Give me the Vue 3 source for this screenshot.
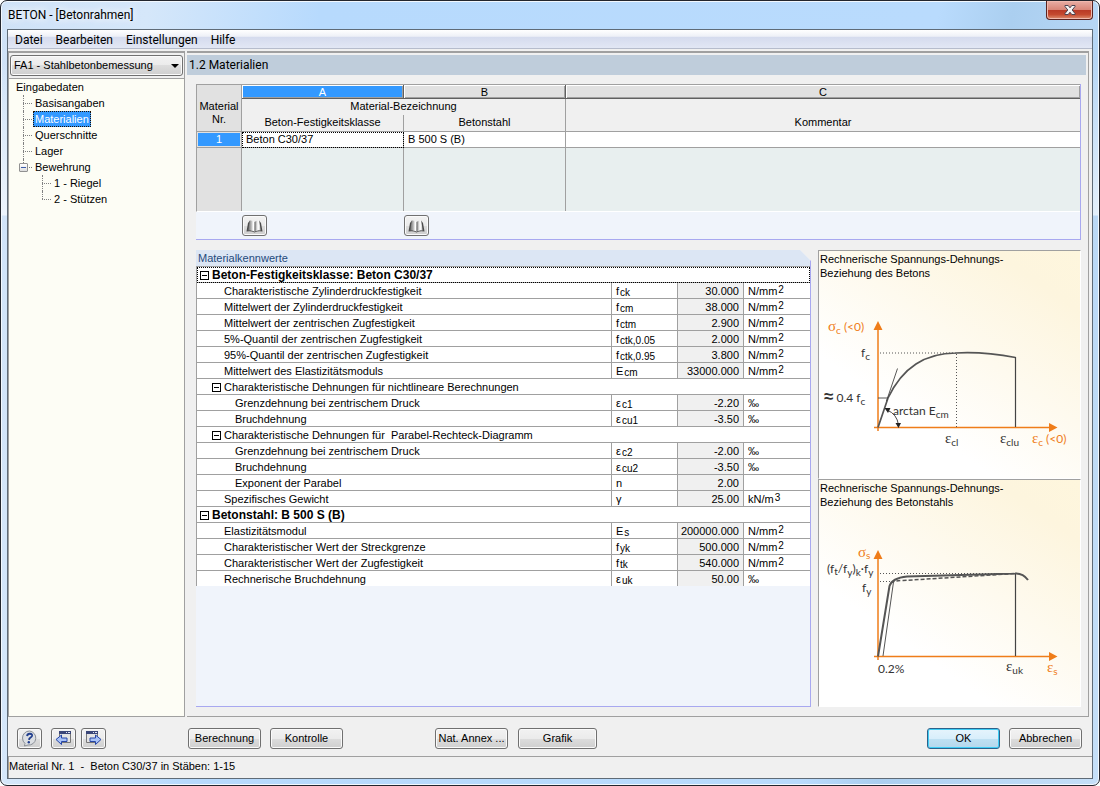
<script setup>
const menu = ['Datei', 'Bearbeiten', 'Einstellungen', 'Hilfe']

const rows = [
  { kind: 'section', name: 'Beton-Festigkeitsklasse: Beton C30/37', focus: true },
  { name: 'Charakteristische Zylinderdruckfestigkeit', sym: 'f', sub: 'ck', value: '30.000', unit: 'N/mm', sup: '2' },
  { name: 'Mittelwert der Zylinderdruckfestigkeit', sym: 'f', sub: 'cm', value: '38.000', unit: 'N/mm', sup: '2' },
  { name: 'Mittelwert der zentrischen Zugfestigkeit', sym: 'f', sub: 'ctm', value: '2.900', unit: 'N/mm', sup: '2' },
  { name: '5%-Quantil der zentrischen Zugfestigkeit', sym: 'f', sub: 'ctk,0.05', value: '2.000', unit: 'N/mm', sup: '2' },
  { name: '95%-Quantil der zentrischen Zugfestigkeit', sym: 'f', sub: 'ctk,0.95', value: '3.800', unit: 'N/mm', sup: '2' },
  { name: 'Mittelwert des Elastizitätsmoduls', sym: 'E', sub: 'cm', value: '33000.000', unit: 'N/mm', sup: '2' },
  { kind: 'subsection', name: 'Charakteristische Dehnungen für nichtlineare Berechnungen' },
  { deep: true, name: 'Grenzdehnung bei zentrischem Druck', sym: 'ε', sub: 'c1', value: '-2.20', unit: '‰' },
  { deep: true, name: 'Bruchdehnung', sym: 'ε', sub: 'cu1', value: '-3.50', unit: '‰' },
  { kind: 'subsection', name: 'Charakteristische Dehnungen für\u00a0 Parabel-Rechteck-Diagramm' },
  { deep: true, name: 'Grenzdehnung bei zentrischem Druck', sym: 'ε', sub: 'c2', value: '-2.00', unit: '‰' },
  { deep: true, name: 'Bruchdehnung', sym: 'ε', sub: 'cu2', value: '-3.50', unit: '‰' },
  { deep: true, name: 'Exponent der Parabel', sym: 'n', value: '2.00' },
  { name: 'Spezifisches Gewicht', sym: 'γ', value: '25.00', unit: 'kN/m', sup: '3' },
  { kind: 'section', name: 'Betonstahl: B 500 S (B)' },
  { name: 'Elastizitätsmodul', sym: 'E', sub: 's', value: '200000.000', unit: 'N/mm', sup: '2' },
  { name: 'Charakteristischer Wert der Streckgrenze', sym: 'f', sub: 'yk', value: '500.000', unit: 'N/mm', sup: '2' },
  { name: 'Charakteristischer Wert der Zugfestigkeit', sym: 'f', sub: 'tk', value: '540.000', unit: 'N/mm', sup: '2' },
  { name: 'Rechnerische Bruchdehnung', sym: 'ε', sub: 'uk', value: '50.00', unit: '‰' },
]
</script>

<template>
  <div class="window">
    <header class="titlebar">
      <h1>BETON - [Betonrahmen]</h1>
      <button class="close" type="button" aria-label="Schließen">
        <svg width="12" height="10" viewBox="0 0 12 10">
          <path d="M1 .5H4.2L6 2.8 7.8.5H11V1.5L8.2 5 11 8.5V9.5H7.8L6 7.2 4.2 9.5H1V8.5L3.8 5 1 1.5Z" fill="#f4f4f4" stroke="#4a4350" stroke-width="1" />
        </svg>
      </button>
    </header>

    <div class="client">
      <nav class="menubar">
        <a v-for="item in menu" :key="item" href="#">{{ item }}</a>
      </nav>

      <div class="workspace">
        <aside class="navigator">
          <div class="picker">
            <select aria-label="Bemessungsfall">
              <option>FA1 - Stahlbetonbemessung</option>
            </select>
            <svg class="arrow" width="8" height="4" viewBox="0 0 8 4"><path d="M0 0H8L4 4Z" fill="#000" /></svg>
          </div>
          <div class="tree">
            <a href="#">Eingabedaten</a>
            <ul>
              <li><a href="#">Basisangaben</a></li>
              <li><a href="#" class="selected">Materialien</a></li>
              <li><a href="#">Querschnitte</a></li>
              <li><a href="#">Lager</a></li>
              <li class="open">
                <button class="toggle" type="button" aria-label="Bewehrung zuklappen"></button>
                <a href="#">Bewehrung</a>
                <ul>
                  <li><a href="#">1 - Riegel</a></li>
                  <li><a href="#">2 - Stützen</a></li>
                </ul>
              </li>
            </ul>
          </div>
        </aside>

        <main class="page">
          <h2>1.2 Materialien</h2>

          <section class="materials">
            <table>
              <colgroup>
                <col class="c-nr" /><col class="c-a" /><col class="c-a" /><col />
              </colgroup>
              <thead>
                <tr class="letters">
                  <th rowspan="3" class="corner">Material<br />Nr.</th>
                  <th class="letter active"><span>A</span></th>
                  <th class="letter"><span>B</span></th>
                  <th class="letter last"><span>C</span></th>
                </tr>
                <tr class="captions">
                  <th colspan="2" class="edge">Material-Bezeichnung</th>
                  <th></th>
                </tr>
                <tr class="captions bottom">
                  <th class="edge">Beton-Festigkeitsklasse</th>
                  <th class="edge">Betonstahl</th>
                  <th>Kommentar</th>
                </tr>
              </thead>
              <tbody>
                <tr class="data">
                  <th class="rowno">1</th>
                  <td class="focus">Beton C30/37</td>
                  <td>B 500 S (B)</td>
                  <td></td>
                </tr>
                <tr class="filler"><th></th><td></td><td></td><td></td></tr>
              </tbody>
            </table>
            <div class="library">
              <button v-for="n in 2" :key="n" class="btn icon" type="button" aria-label="Bibliothek">
                <svg width="17" height="14" viewBox="0 0 17 14">
                  <defs>
                    <linearGradient id="leaf-left" x1="0" x2="1"><stop offset="0" stop-color="#6d6d6d" /><stop offset=".5" stop-color="#b9b9b9" /><stop offset=".8" stop-color="#fff" /></linearGradient>
                    <linearGradient id="leaf-right" x1="0" x2="1"><stop offset="0" stop-color="#555" /><stop offset=".4" stop-color="#e8e8e8" /><stop offset=".7" stop-color="#fff" /><stop offset="1" stop-color="#999" /></linearGradient>
                  </defs>
                  <path d="M.5 12.500 2 4 4 1.500V11L8.500 12.500 13 11V1.500L15 4 16.500 12.500Q12 11.500 8.500 13.500 5 11.500.5 12.500Z" fill="#4c4c4c" />
                  <path d="M3.800 1.500Q6.500 1 8.500 3V12.500Q6 10.500 2.200 11.500Z" fill="url(#leaf-left)" />
                  <path d="M8.500 3Q10.500 1 13.200 1.500L14.800 11.500Q11 10.500 8.500 12.500Z" fill="url(#leaf-right)" />
                </svg>
              </button>
            </div>
          </section>

          <div class="details">
            <section class="properties">
              <h3>Materialkennwerte</h3>
              <table>
                <colgroup>
                  <col /><col class="c-v" /><col class="c-v" /><col class="c-v" />
                </colgroup>
                <tbody>
                  <tr v-for="(row, i) in rows" :key="i">
                    <td v-if="row.kind" colspan="4" :class="[row.kind, { focus: row.focus }]">
                      <button class="fold" type="button" aria-label="Zuklappen"></button>{{ row.name }}
                    </td>
                    <template v-else>
                      <td :class="row.deep ? 'deep' : 'name'">{{ row.name }}</td>
                      <td class="symbol">{{ row.sym }}<sub v-if="row.sub">{{ row.sub }}</sub></td>
                      <td class="value">{{ row.value }}</td>
                      <td class="unit">{{ row.unit }}<sup v-if="row.sup">{{ row.sup }}</sup></td>
                    </template>
                  </tr>
                </tbody>
              </table>
            </section>

            <div class="diagrams">
              <figure>
                <figcaption>Rechnerische Spannungs-Dehnungs-<br />Beziehung des Betons</figcaption>
                <svg width="261" height="190" viewBox="0 0 261 190">
                  <path d="M59 151V50M55 147.500H230" fill="none" stroke="#ef7d1a" stroke-width="1.500" />
                  <path d="M59 41 63.500 50H54.500ZM238.500 147.500 230 143V152Z" fill="#ef7d1a" />
                  <path d="M61 73H138M137.500 74V147" fill="none" stroke="#555" stroke-width="1" stroke-dasharray="1 2" />
                  <path d="M59 147.500 69 118Q80 95 97 84T137 73Q165 71.500 196.500 77.500" fill="none" stroke="#555" stroke-width="1.700" />
                  <path d="M196.500 77V147" stroke="#444" stroke-width="1.200" />
                  <path d="M59 118H69M67.500 121 78.500 88.500" fill="none" stroke="#444" stroke-width=".9" />
                  <path d="M68 130Q78 134 79.500 145" fill="none" stroke="#333" stroke-width=".9" />
                  <path d="M65.500 128 71.500 128 69 133ZM79.500 148 76.500 143H82Z" fill="#222" />
                  <g class="orange">
                    <text x="9" y="51"><tspan class="greek">σ</tspan><tspan class="small" dy="3">c</tspan><tspan dy="-3" dx="3">(&lt;0)</tspan></text>
                    <text x="213" y="163"><tspan class="greek">ε</tspan><tspan class="small" dy="3">c</tspan><tspan dy="-3" dx="3">(&lt;0)</tspan></text>
                  </g>
                  <text x="42" y="77">f<tspan class="small" dy="3">c</tspan></text>
                  <text x="5" y="122"><tspan class="approx">≈</tspan> 0.4 f<tspan class="small" dy="3">c</tspan></text>
                  <text x="74" y="135">arctan E<tspan class="small" dy="3">cm</tspan></text>
                  <text x="126" y="163"><tspan class="greek">ε</tspan><tspan class="small" dy="3">cl</tspan></text>
                  <text x="181" y="163"><tspan class="greek">ε</tspan><tspan class="small" dy="3">clu</tspan></text>
                </svg>
              </figure>
              <figure>
                <figcaption>Rechnerische Spannungs-Dehnungs-<br />Beziehung des Betonstahls</figcaption>
                <svg width="261" height="190" viewBox="0 0 261 190">
                  <path d="M59 151V50M55 147.500H230" fill="none" stroke="#ef7d1a" stroke-width="1.500" />
                  <path d="M59 41 63.500 50H54.500ZM238.500 147.500 230 143V152Z" fill="#ef7d1a" />
                  <path d="M61 64.500H196M61 72.500H75" fill="none" stroke="#555" stroke-dasharray="1 2" />
                  <path d="M59 147.500 70.500 77Q73 69 88 67.500L196 64.500Q204 64 209 71" fill="none" stroke="#555" stroke-width="2" />
                  <path d="M72 74Q75 71.500 84 71.500L196 64.500" fill="none" stroke="#555" stroke-width="1.500" stroke-dasharray="4 2" />
                  <path d="M64 147 74.500 73" stroke="#555" stroke-width="1" />
                  <path d="M196.500 65V147" stroke="#444" stroke-width="1.200" />
                  <g class="orange">
                    <text x="39" y="48"><tspan class="greek">σ</tspan><tspan class="small" dy="2">s</tspan></text>
                    <text x="228" y="163"><tspan class="greek">ε</tspan><tspan class="small" dy="3">s</tspan></text>
                  </g>
                  <text x="8" y="64">(f<tspan class="small" dy="2">t</tspan><tspan dy="-2">/f</tspan><tspan class="small" dy="3">y</tspan><tspan dy="-3">)</tspan><tspan class="small" dy="3">k</tspan><tspan dy="-3">·f</tspan><tspan class="small" dy="3">y</tspan></text>
                  <text x="43" y="83">f<tspan class="small" dy="3">y</tspan></text>
                  <text x="59" y="164">0.2%</text>
                  <text x="187" y="162"><tspan class="greek">ε</tspan><tspan class="small" dy="3">uk</tspan></text>
                </svg>
              </figure>
            </div>
          </div>
        </main>
      </div>

      <footer class="actions">
        <div class="tools">
          <button class="btn icon help" type="button" aria-label="Hilfe">
            <svg width="19" height="17" viewBox="0 0 19 17">
              <path d="M9.500 1A7 7 0 1 1 8 15Q6 15.500 4.500 16 4.500 14.500 5 13.500 2.500 11.500 2.500 8A7 7 0 0 1 9.500 1Z" fill="#dcdfe3" stroke="#8a8f96" />
              <path d="M7 6Q7.500 3.500 10 3.700 12.500 4 12 6 11.500 7.200 10 8 9.200 8.600 9 9.800" fill="none" stroke="#223f8e" stroke-width="1.900" />
              <circle cx="8.800" cy="12.200" r="1.200" fill="#223f8e" />
            </svg>
          </button>
          <button class="btn icon" type="button" aria-label="Zurück">
            <svg width="17" height="17" viewBox="0 0 17 17">
              <path d="M4.500 1.500H15.500V12.500H4.500Z" fill="#e4e4e4" stroke="#777" />
              <path d="M4 1H16V4H4Z" fill="#3a4678" /><path d="M11 2H12V3H11ZM13 2H15V3H13Z" fill="#dfe4f5" />
              <path d="M1 9.500 6.500 5V8H12V11.500H6.500V14.500Z" fill="#a9c2f7" stroke="#2646a8" />
            </svg>
          </button>
          <button class="btn icon" type="button" aria-label="Weiter">
            <svg width="17" height="17" viewBox="0 0 17 17">
              <path d="M1.500 1.500H12.500V12.500H1.500Z" fill="#e4e4e4" stroke="#777" />
              <path d="M1 1H13V4H1Z" fill="#3a4678" /><path d="M8 2H9V3H8ZM10 2H12V3H10Z" fill="#dfe4f5" />
              <path d="M16 9.500 10.500 5V8H5V11.500H10.500V14.500Z" fill="#a9c2f7" stroke="#2646a8" />
            </svg>
          </button>
        </div>
        <div class="buttons">
          <button class="btn" type="button">Berechnung</button>
          <button class="btn" type="button">Kontrolle</button>
        </div>
        <div class="buttons second">
          <button class="btn" type="button">Nat. Annex ...</button>
          <button class="btn wide" type="button">Grafik</button>
        </div>
        <div class="buttons confirm">
          <button class="btn ok" type="button">OK</button>
          <button class="btn" type="button">Abbrechen</button>
        </div>
      </footer>

      <div class="status">Material Nr. 1&nbsp; -&nbsp; Beton C30/37 in Stäben: 1-15</div>
    </div>
  </div>
</template>

<style>
body { background: #fff; }
</style>

<style scoped>
* { box-sizing: border-box; }
a { color: inherit; text-decoration: none; }
h1, h2, h3, ul, figure { margin: 0; padding: 0; font-weight: normal; }
ul { list-style: none; }
button, select { font: inherit; color: inherit; padding: 0; margin: 0; }
table { width: 100%; table-layout: fixed; border-collapse: separate; border-spacing: 0; }
th, td { padding: 0; font-weight: normal; white-space: nowrap; }
svg { display: block; }

.window {
  display: flex;
  flex-direction: column;
  min-height: 100vh;
  padding: 0 6px 6px;
  border: 1px solid #23262e;
  border-radius: 7px;
  box-shadow: inset 0 0 0 1px #f2f8fe;
  background:
    linear-gradient(transparent 60px, rgba(255, 255, 255, 0.6) 214px, transparent 215px),
    linear-gradient(100deg, #cfe2f7 0, #d5e7fa 12%, #b7dafd 26%, #b9dbfd 76%, #abcff0 82%, #b8d7f5 90%, #c5dff8 100%);
  font: 11px/13px "Liberation Sans", Arial, sans-serif;
  color: #000;
}
.titlebar {
  display: flex;
  justify-content: space-between;
  align-items: flex-start;
  height: 28px;
  padding-left: 1px;
}
.titlebar h1 {
  font: 12px/16px Roboto, "Segoe UI", sans-serif;
  margin-top: 6px;
  text-shadow: 0 0 8px #fff, 0 0 8px #fff;
}
.close {
  display: flex;
  align-items: center;
  justify-content: center;
  width: 47px;
  height: 19px;
  border: 1px solid #5b2320;
  border-top: 0;
  border-radius: 0 0 4px 4px;
  background: linear-gradient(#e8aea5 0, #d98678 48%, #b93a26 52%, #c4492f 75%, #dd8f70 100%);
  box-shadow: inset 0 0 0 1px #f0b9ae;
}
.client {
  flex: 1;
  display: flex;
  flex-direction: column;
  border: 1px solid #5f6b77;
  background: #f0f0f0;
}
.menubar {
  display: flex;
  gap: 13px;
  height: 19px;
  padding-left: 7px;
  border-bottom: 1px solid #b6bccc;
  background: linear-gradient(#fff 0, #eef0f7 35%, #d5dbee 40%, #e2e7f4 100%);
  font: 12px/20px Roboto, "Segoe UI", sans-serif;
}
.workspace {
  flex: 1;
  display: flex;
  gap: 2px;
  margin-top: 2px;
  padding-right: 3px;
}
.navigator {
  display: flex;
  flex-direction: column;
  width: 177px;
  border: 1px solid #a0a0a0;
  border-top-width: 2px;
  background: #f0f0f0;
}
.picker { position: relative; padding: 2px 1px; border-bottom: 1px solid #a0a0a0; }
.picker select {
  display: block;
  appearance: none;
  width: 100%;
  height: 21px;
  padding-left: 3px;
  border: 1px solid #707070;
  border-radius: 3px;
  background: linear-gradient(#f2f2f2 0, #ebebeb 50%, #dddddd 50%, #cfcfcf 100%);
  box-shadow: inset 0 0 0 1px #fafafa;
}
.picker .arrow { position: absolute; right: 5px; top: 11px; }
.tree { flex: 1; padding: 0 7px; background: #fdfdf5; line-height: 16px; }
.tree a { display: inline-block; height: 16px; vertical-align: top; }
.tree ul { padding-left: 7px; }
.tree li { position: relative; padding-left: 10px; }
.tree li::before {
  content: "";
  position: absolute;
  left: 0;
  top: 8px;
  width: 9px;
  border-top: 1px dotted #808080;
}
.tree li::after {
  content: "";
  position: absolute;
  left: 0;
  top: 0;
  height: 16px;
  border-left: 1px dotted #808080;
}
.tree li:last-child::after { height: 8px; }
.tree li a { padding: 0 2px; }
.tree li ul { padding-left: 9px; }
.tree .selected {
  background: #3399ff;
  color: #fff;
  outline: 1px dotted #201000;
  outline-offset: -1px;
}
.toggle {
  position: absolute;
  z-index: 1;
  left: -4px;
  top: 4px;
  width: 9px;
  height: 9px;
  border: 1px solid #919191;
  border-radius: 1px;
  background: linear-gradient(#3b5ba8, #3b5ba8) center / 5px 1px no-repeat, linear-gradient(#fff, #ddd);
}

.page {
  flex: 1;
  min-width: 0;
  display: flex;
  flex-direction: column;
  padding: 2px 2px 9px 0;
  border: solid #a0a0a0;
  border-width: 2px 1px 1px 0;
}
.page h2 {
  height: 20px;
  padding-left: 2px;
  background: #bfcddb;
  font: 12px/20px Roboto, "Segoe UI", sans-serif;
}
.materials {
  margin: 9px 5px 0 9px;
  border: solid #a8a8f0;
  border-width: 0 1px 1px 0;
  background: #f0f4fb;
}
.materials table { border-top: 1px solid #a0a0a0; border-left: 1px solid #a0a0a0; border-bottom: 1px solid #fff; }
.c-nr { width: 45px; }
.c-a { width: 162px; }
.materials th, .materials td { border: solid #a0a0a0; border-width: 0 1px 1px 0; }
.materials tr > :last-child { border-right: 0; }
.materials .corner { padding-top: 9px; background: #e1e1e1; vertical-align: middle; }
.materials .letter {
  height: 14px;
  padding: 1px 0 0 1px;
  border-color: #606060;
  border-right-width: 1px;
  background: #fff;
  line-height: 12px;
}
.letter span { display: block; height: 12px; background: #e1e1e1; border: solid #a0a0a0; border-width: 0 1px 1px 0; }
.materials .active span { background: #3399ff; color: #fff; }
.materials .captions th { height: 16px; background: #f0f0f0; border-width: 0; line-height: 14px; vertical-align: top; }
.materials .captions .edge { border-right-width: 1px; }
.materials .bottom th { height: 17px; border-bottom-width: 1px; }
.materials .data th, .materials .data td { height: 16px; line-height: 15px; }
.materials .data td { background: #fff; padding-left: 4px; }
.materials .data th { background: #3399ff; color: #fff; box-shadow: inset 0 0 0 1px #e1e1e1; }
.data .focus { outline: 1px dotted #000; outline-offset: -1px; }
.materials .filler th { height: 63px; background: #e1e1e1; border-bottom: 0; }
.materials .filler td { background: #e8efef; border-bottom: 0; }
.library { display: flex; gap: 137px; padding: 3px 0 3px 46px; }

.details { flex: 1; display: flex; gap: 7px; margin: 10px 5px 0 9px; }
.properties {
  flex: 1;
  min-width: 0;
  border: solid #a8a8f0;
  border-width: 0 1px 1px 0;
  background: #f0f4fb;
  clip-path: polygon(0 0, calc(100% - 11px) 0, 100% 11px, 100% 100%, 0 100%);
}
.properties h3 {
  height: 16px;
  padding-left: 2px;
  background: #dce6f4;
  color: #1f4a7c;
  font-size: 11px;
  line-height: 17px;
}
.properties table { border: solid #a0a0a0; border-width: 1px 0 0 1px; background: #fff; }
.c-v { width: 66px; }
.properties td { height: 16px; padding-top: 1px; line-height: 14px; border-bottom: 1px solid #a0a0a0; }
.properties tr:last-child td { height: 15px; border-bottom: 0; }
.properties .name { padding-left: 27px; border-right: 1px solid #a0a0a0; }
.properties .deep { padding-left: 38px; border-right: 1px solid #a0a0a0; }
.properties .symbol { padding-left: 4px; border-right: 1px solid #a0a0a0; }
.properties .value { padding-right: 4px; text-align: right; background: #f0f0f0; border-right: 1px solid #a0a0a0; }
.properties .unit { padding-left: 4px; }
.properties sub, .properties sup { font-size: 10px; line-height: 0; }
.properties sub { vertical-align: -1px; margin-left: 1px; }
.properties sup { vertical-align: 2px; margin-left: 1px; }
.properties .section { padding-left: 3px; font-weight: bold; font-size: 12px; }
.properties .subsection { padding-left: 15px; }
.properties .focus { outline: 1px dotted #000; outline-offset: -1px; }
.fold {
  display: inline-block;
  width: 9px;
  height: 9px;
  margin-right: 3px;
  border: 1px solid #000;
  background: linear-gradient(#000, #000) center / 5px 1px no-repeat #fff;
}

.diagrams { display: flex; flex-direction: column; }
figure {
  flex: 1;
  width: 263px;
  border: 1px solid #fff;
  border-top-color: #a0a0a0;
  border-left-color: #a0a0a0;
  background: linear-gradient(35deg, #fff 30%, #fdf5de 85%, #fef6dd 100%);
}
figcaption { padding: 1px 0 0 1px; line-height: 14px; }
figure text { font: 12px Lato, sans-serif; fill: #333; }
figure .small { font-size: 10px; }
figure .greek { font: 15px "Liberation Serif", serif; }
figure .approx { font: bold 17px "Liberation Sans", sans-serif; }
figure .orange text { fill: #ef7d1a; }

.actions { display: flex; align-items: center; padding: 11px 10px 7px 9px; border-bottom: 1px solid #a0a0a0; }
.tools { display: flex; gap: 5px; width: 171px; }
.tools .help { margin-right: 4px; }
.buttons { display: flex; gap: 9px; }
.second { gap: 10px; margin-left: 92px; }
.confirm { margin-left: auto; }
.btn {
  display: flex;
  align-items: center;
  justify-content: center;
  width: 73px;
  height: 21px;
  border: 1px solid #707070;
  border-radius: 3px;
  background: linear-gradient(#f2f2f2 0, #ebebeb 50%, #dddddd 50%, #cfcfcf 100%);
  box-shadow: inset 0 0 0 1px #fafafa;
  white-space: nowrap;
}
.btn.icon { width: 25px; }
.btn.wide { width: 79px; }
.btn.ok {
  border-color: #2c628b;
  background: linear-gradient(#e6f4fc 0, #d8eefb 50%, #bfe1f3 50%, #b5d7ec 100%);
  box-shadow: inset 0 0 0 1px #3fcdf5;
}
.status { height: 21px; line-height: 19px; border-left: 1px solid #a0a0a0; }
</style>
